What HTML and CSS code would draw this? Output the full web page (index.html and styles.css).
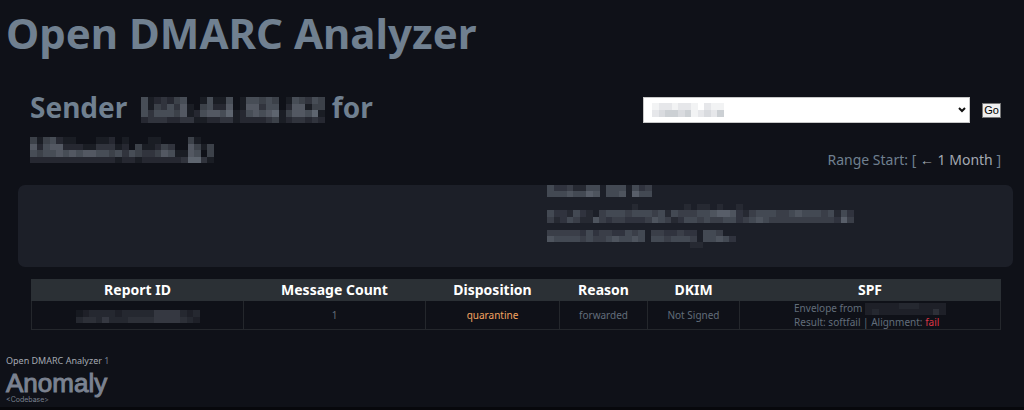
FILE: index.html
```html
<!DOCTYPE html>
<html lang="en">

<head>
    <meta charset="UTF-8">
    <meta name="viewport" content="width=device-width, initial-scale=1.0">
    <title>Open DMARC Analyzer</title>
    <link rel="stylesheet" href="styles.css">
    <script src="mosaic.js" defer></script>
</head>

<body>
    <h1>Open DMARC Analyzer</h1>

    <main>
        <div class="top">
            <h2>Sender <svg class="mosaic ip" width="184" height="26" aria-hidden="true" data-rows="5123245001511501554540154354 5143536104522601663550266144 5355546125665712565671466571 2333223311223312222341233232"></svg> for
                <svg class="mosaic" width="184" height="26" aria-hidden="true" data-rows="4145211000112010001100004100 6256622211333120411243006414 5455656566554535433465116504 2222222222222122122222237731"></svg></h2>

            <div class="controls">
                <form class="domain-form">
                    <div class="select-wrap">
                        <select class="domain-select" aria-label="Domain">
                            <option></option>
                        </select>
                        <svg class="mosaic select-value" width="72" height="14" aria-hidden="true" data-rows="12212210211 23443412324"></svg>
                        <svg class="chevron" viewBox="0 0 8 6" aria-hidden="true"><path d="M1 1l3 3 3-3"/></svg>
                    </div>
                    <button type="submit">Go</button>
                </form>
                <div class="range">Range Start: [ <a href="#">← 1 Month</a> ]</div>
            </div>
        </div>

        <div class="details">
            <div class="host">
                <svg class="mosaic" width="105" height="12" aria-hidden="true" data-rows="4223114404440423 4445446504450644"></svg>
                <svg class="mosaic" width="307" height="19" aria-hidden="true" data-rows="00000000000001000000010110100100000000000000000 42214210344434443414333445665213444334544434142 31243115323322235431244343344234543333333333263"></svg>
                <svg class="mosaic" width="202" height="18" aria-hidden="true" data-rows="3333324233224340332232204430000 5444434334544540443444304454200 0000000000000000000000110000000"></svg>
            </div>
        </div>

        <table>
            <colgroup>
                <col class="col-id">
                <col class="col-count">
                <col class="col-disposition">
                <col class="col-reason">
                <col class="col-dkim">
                <col>
            </colgroup>
            <thead>
                <tr>
                    <th>Report ID</th>
                    <th>Message Count</th>
                    <th>Disposition</th>
                    <th>Reason</th>
                    <th>DKIM</th>
                    <th>SPF</th>
                </tr>
            </thead>
            <tbody>
                <tr>
                    <td><svg class="mosaic dim" width="124" height="13" aria-hidden="true" data-rows="1233332333335555323 3443533344445555432"></svg></td>
                    <td>1</td>
                    <td class="warn">quarantine</td>
                    <td>forwarded</td>
                    <td>Not Signed</td>
                    <td>
                        <div class="spf">
                            Envelope from <svg class="mosaic dim" width="81" height="12" aria-hidden="true" data-rows="222223332222 232222222242"></svg><br>
                            Result: softfail | Alignment: <span class="fail">fail</span>
                        </div>
                    </td>
                </tr>
            </tbody>
        </table>
    </main>

    <footer>
        <div class="version"><a href="#">Open DMARC Analyzer</a> 1</div>
        <a class="logo" href="#">
            <span class="logo-name">Anomaly</span>
            <span class="logo-sub">&lt;Codebase&gt;</span>
        </a>
    </footer>
</body>

</html>
```
FILE: styles.css
```css
body {
    box-sizing: border-box;
    min-height: 100vh;
    margin: 0;
    padding: 8px 6px 0;
    border-bottom: 3px solid #07080c;
    background-color: #0f1118;
    color: #708090;
    font-family: "Noto Sans", Verdana, sans-serif;
}

a {
    color: #a4a9b2;
    text-decoration: none;
}

h1 {
    margin: 0;
    font-size: 42px;
    line-height: 50px;
}

h2 {
    flex: 0 1 400px;
    margin: 0;
    font-size: 28px;
    line-height: 40px;
}

.mosaic {
    fill: #808994;
    shape-rendering: crispEdges;
}

.mosaic.dim {
    fill: #5b5f69;
}

h2 .mosaic {
    vertical-align: -5px;
}

h2 .ip {
    margin-left: 6px;
}

.top {
    display: flex;
    justify-content: space-between;
    padding: 29px 17px 15px 24px;
}

.controls {
    display: flex;
    flex-direction: column;
    width: 358px;
    padding-top: 10px;
}

.domain-form {
    display: flex;
    align-items: center;
    gap: 12px;
}

.select-wrap {
    display: grid;
    flex: 1;
    align-items: center;
}

.select-wrap > * {
    grid-area: 1 / 1;
}

.domain-select {
    appearance: none;
    width: 100%;
    height: 26px;
    border: 1px solid #c8c8c8;
    border-radius: 0;
    background-color: #fff;
}

.select-value {
    margin-left: 9px;
    pointer-events: none;
}

.chevron {
    justify-self: end;
    width: 8px;
    height: 6px;
    margin-right: 4px;
    fill: none;
    stroke: #111;
    stroke-width: 2;
    pointer-events: none;
}

button {
    padding: 0 1px;
    border: 1px solid #777;
    background-color: #efefef;
    color: #000;
    font-family: "Liberation Sans", Arial, sans-serif;
    font-size: 11px;
    line-height: 13px;
}

.range {
    margin-top: 27px;
    font-size: 14px;
    line-height: 20px;
    text-align: right;
}

.range a {
    color: #a4a9b2;
}

.details {
    display: grid;
    grid-template-columns: 1fr 1fr;
    min-height: 82px;
    margin: 0 5px 0 12px;
    border-radius: 7px;
    background-color: #1c1f28;
}

.host {
    display: flex;
    flex-direction: column;
    grid-column: 2;
    gap: 7px;
    padding-left: 31px;
}

table {
    width: calc(100% - 42px);
    margin: 12px 0 0 25px;
    border-collapse: collapse;
    table-layout: fixed;
    text-align: center;
}

.col-id {
    width: 212px;
}

.col-count {
    width: 182px;
}

.col-disposition {
    width: 134px;
}

.col-reason {
    width: 88px;
}

.col-dkim {
    width: 92px;
}

th,
td {
    padding: 0;
    border: 1px solid #24272c;
}

th {
    border-color: #2b3035;
    background-color: #2b3035;
    color: #fff;
    font-size: 14px;
    line-height: 20px;
}

td {
    color: #626d7a;
    font-size: 10px;
    line-height: 14px;
}

td .mosaic {
    vertical-align: middle;
}

.warn {
    color: #f4a460;
}

.fail {
    color: #dc3545;
}

.spf {
    display: inline-block;
    text-align: left;
}

footer {
    padding-top: 24px;
}

.version {
    font-size: 9px;
    line-height: 14px;
}

.logo {
    display: flex;
    flex-direction: column;
    margin-top: 2px;
    color: #7b8290;
    font-family: "Liberation Sans", Arial, sans-serif;
}

.logo-name {
    font-size: 26px;
    line-height: 26px;
    -webkit-text-stroke: 1px #7b8290;
}

.logo-sub {
    font-family: Inter, sans-serif;
    font-size: 7px;
    line-height: 8px;
}
```
FILE: mosaic.js
```js
// Fills each .mosaic with square cells, one digit (0-9) per cell for its strength
document.querySelectorAll('.mosaic').forEach(svg => {
    const rows = svg.dataset.rows.split(' ');
    svg.setAttribute('viewBox', `0 0 ${rows[0].length} ${rows.length}`);
    svg.setAttribute('preserveAspectRatio', 'none');

    rows.forEach((row, y) => {
        [...row].forEach((level, x) => {
            const cell = document.createElementNS('http://www.w3.org/2000/svg', 'rect');
            cell.setAttribute('x', x);
            cell.setAttribute('y', y);
            cell.setAttribute('width', 1);
            cell.setAttribute('height', 1);
            cell.setAttribute('fill-opacity', level / 10);
            svg.appendChild(cell);
        });
    });
});
```
